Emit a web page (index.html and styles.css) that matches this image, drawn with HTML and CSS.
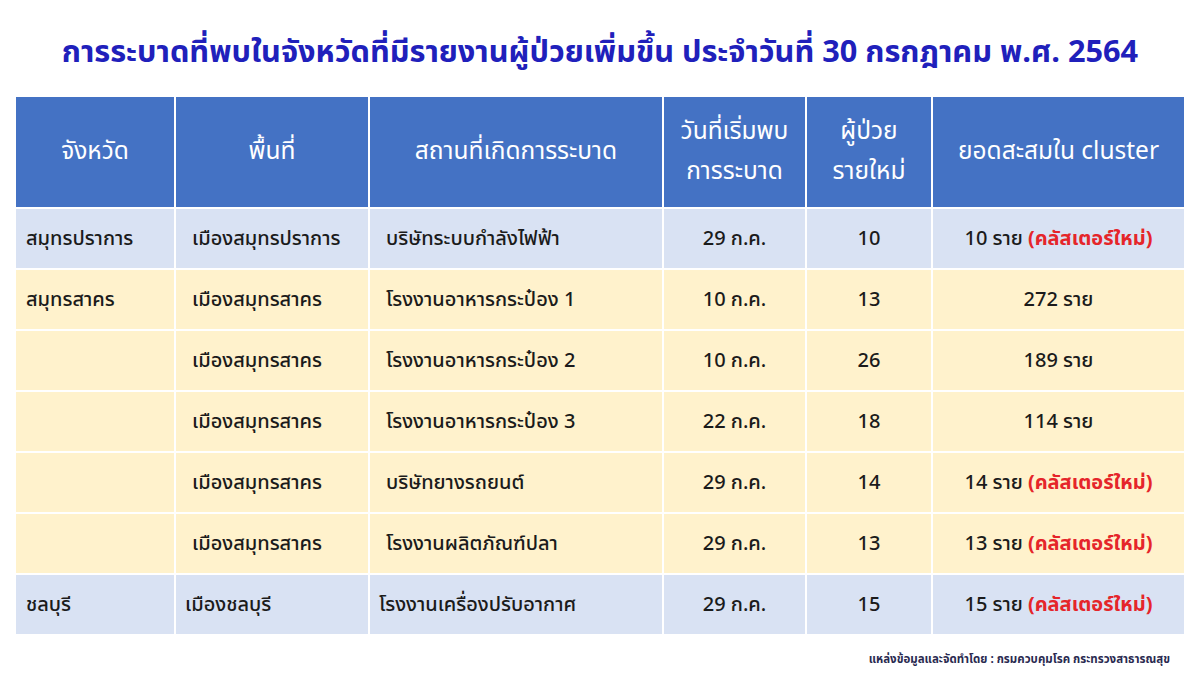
FILE: index.html
```html
<!DOCTYPE html>
<html lang="th">
<head>
<meta charset="utf-8">
<link rel="stylesheet" href="styles.css">
</head>
<body>
<div class="page">
  <h1 class="title">การระบาดที่พบในจังหวัดที่มีรายงานผู้ป่วยเพิ่มขึ้น ประจำวันที่ 30 กรกฎาคม พ.ศ. 2564</h1>
  <div class="table">
    <div class="th">จังหวัด</div>
    <div class="th">พื้นที่</div>
    <div class="th">สถานที่เกิดการระบาด</div>
    <div class="th">วันที่เริ่มพบ<br>การระบาด</div>
    <div class="th">ผู้ป่วย<br>รายใหม่</div>
    <div class="th">ยอดสะสมใน cluster</div>

    <div class="td b l1">สมุทรปราการ</div>
    <div class="td b l">เมืองสมุทรปราการ</div>
    <div class="td b l">บริษัทระบบกำลังไฟฟ้า</div>
    <div class="td b c">29 ก.ค.</div>
    <div class="td b c">10</div>
    <div class="td b c">10 ราย <span class="new">(คลัสเตอร์ใหม่)</span></div>

    <div class="td y l1">สมุทรสาคร</div>
    <div class="td y l">เมืองสมุทรสาคร</div>
    <div class="td y l">โรงงานอาหารกระป๋อง 1</div>
    <div class="td y c">10 ก.ค.</div>
    <div class="td y c">13</div>
    <div class="td y c">272 ราย</div>

    <div class="td y l1"></div>
    <div class="td y l">เมืองสมุทรสาคร</div>
    <div class="td y l">โรงงานอาหารกระป๋อง 2</div>
    <div class="td y c">10 ก.ค.</div>
    <div class="td y c">26</div>
    <div class="td y c">189 ราย</div>

    <div class="td y l1"></div>
    <div class="td y l">เมืองสมุทรสาคร</div>
    <div class="td y l">โรงงานอาหารกระป๋อง 3</div>
    <div class="td y c">22 ก.ค.</div>
    <div class="td y c">18</div>
    <div class="td y c">114 ราย</div>

    <div class="td y l1"></div>
    <div class="td y l">เมืองสมุทรสาคร</div>
    <div class="td y l">บริษัทยางรถยนต์</div>
    <div class="td y c">29 ก.ค.</div>
    <div class="td y c">14</div>
    <div class="td y c">14 ราย <span class="new">(คลัสเตอร์ใหม่)</span></div>

    <div class="td y l1"></div>
    <div class="td y l">เมืองสมุทรสาคร</div>
    <div class="td y l">โรงงานผลิตภัณฑ์ปลา</div>
    <div class="td y c">29 ก.ค.</div>
    <div class="td y c">13</div>
    <div class="td y c">13 ราย <span class="new">(คลัสเตอร์ใหม่)</span></div>

    <div class="td b l1">ชลบุรี</div>
    <div class="td b l n">เมืองชลบุรี</div>
    <div class="td b l n">โรงงานเครื่องปรับอากาศ</div>
    <div class="td b c">29 ก.ค.</div>
    <div class="td b c">15</div>
    <div class="td b c">15 ราย <span class="new">(คลัสเตอร์ใหม่)</span></div>
  </div>
  <div class="source">แหล่งข้อมูลและจัดทำโดย : กรมควบคุมโรค กระทรวงสาธารณสุข</div>
</div>
</body>
</html>
```

FILE: styles.css
```css
html, body {
  margin: 0;
  padding: 0;
  background: #ffffff;
}
body {
  font-family: Tahoma, "Noto Sans Thai", "Noto Sans", "DejaVu Sans", sans-serif;
  width: 1200px;
  height: 675px;
  overflow: hidden;
}
.page {
  padding: 0 16px 0 16px;
  display: flex;
  flex-direction: column;
}
.title {
  margin: 0;
  height: 97px;
  display: flex;
  align-items: center;
  justify-content: center;
  padding-top: 8px;
  box-sizing: border-box;
  font-size: 30.7px;
  font-weight: bold;
  color: #2020bb;
  letter-spacing: 0;
  white-space: nowrap;
}
.table {
  display: grid;
  grid-template-columns: 158px 192px 292px 141px 124px 251px;
  grid-template-rows: 110px repeat(7, 59px);
  gap: 2px;
  width: 1168px;
}
.th {
  background: #4472c4;
  color: #ffffff;
  font-size: 24.5px;
  line-height: 40px;
  display: flex;
  align-items: center;
  justify-content: center;
  text-align: center;
}
.td {
  display: flex;
  align-items: center;
  font-size: 20px;
  color: #1b1b1b;
  font-weight: 500;
  white-space: nowrap;
}
.b { background: #d9e2f3; }
.y { background: #fff2cc; }
.l1 { padding-left: 10px; }
.l { padding-left: 16px; }
.l.n { padding-left: 9px; }
.c { justify-content: center; }
.new {
  color: #e5252a;
  font-weight: bold;
  margin-left: 5px;
}
.source {
  margin-top: 17px;
  text-align: right;
  padding-right: 14px;
  font-size: 11.5px;
  font-weight: bold;
  color: #2a2a50;
}
```
